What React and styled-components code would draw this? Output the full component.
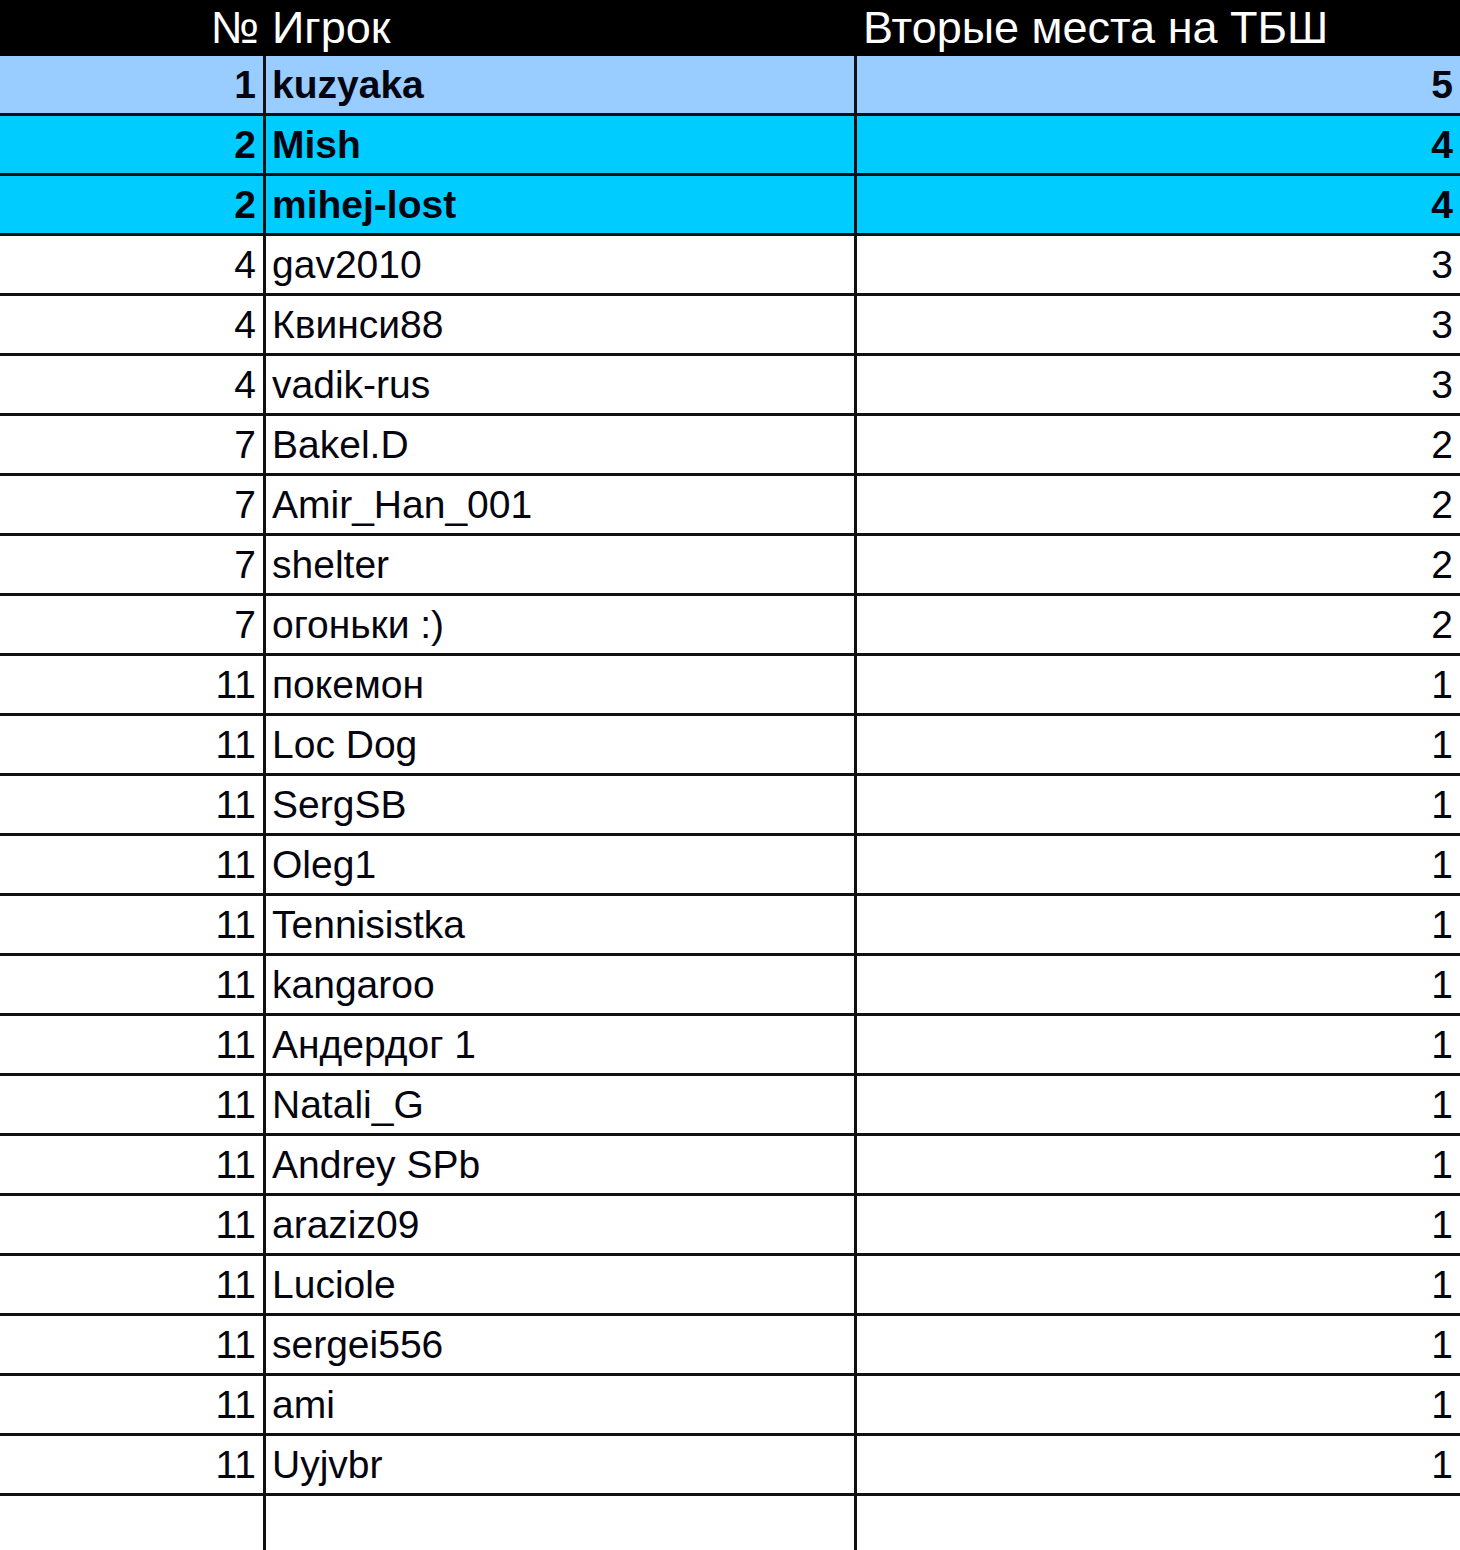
import styled, { createGlobalStyle } from "styled-components";

const GlobalStyle = createGlobalStyle`
    html, body {
        margin: 0;
        padding: 0;
        background: #ffffff;
        overflow: hidden;
    }
    body {
        font-family: "Liberation Sans", Arial, sans-serif;
    }
`;

const Sheet = styled.div`
    width: 1460px;
    height: 1550px;
    overflow: hidden;
    display: flex;
    flex-direction: column;
`;

const Head = styled.div`
    display: grid;
    grid-template-columns: 266px 591px 1fr;
    height: 56px;
    flex-shrink: 0;
    background-color: #000;
    color: #fff;
    font-size: 45px;
    line-height: 56px;
`;

const HeadCell = styled.div`
    text-align: ${(p) => (p.$right ? "right" : "left")};
    padding: ${(p) => (p.$right ? "0 7px 0 0" : "0 0 0 6px")};
    white-space: nowrap;
`;

const Row = styled.div`
    display: grid;
    grid-template-columns: 266px 591px 1fr;
    height: ${(p) => (p.$blank ? "60px" : "57px")};
    flex-shrink: 0;
    background-color: ${(p) => p.$bg || "#fff"};
    border-bottom: ${(p) => (p.$blank ? "none" : "3px solid #111")};
    font-size: 39px;
    font-weight: ${(p) => (p.$bold ? 700 : 400)};
    color: #050510;
`;

const Cell = styled.div`
    display: flex;
    align-items: center;
    justify-content: ${(p) => (p.$right ? "flex-end" : "flex-start")};
    padding: ${(p) => (p.$right ? "0 7px 0 0" : "0 0 0 6px")};
    border-right: ${(p) => (p.$last ? "none" : "3px solid #111")};
    white-space: nowrap;
`;

const players = [
    ["1", "kuzyaka", "5", "#99ccff", true],
    ["2", "Mish", "4", "#00ccff", true],
    ["2", "mihej-lost", "4", "#00ccff", true],
    ["4", "gav2010", "3"],
    ["4", "Квинси88", "3"],
    ["4", "vadik-rus", "3"],
    ["7", "Bakel.D", "2"],
    ["7", "Amir_Han_001", "2"],
    ["7", "shelter", "2"],
    ["7", "огоньки :)", "2"],
    ["11", "покемон", "1"],
    ["11", "Loc Dog", "1"],
    ["11", "SergSB", "1"],
    ["11", "Oleg1", "1"],
    ["11", "Tennisistka", "1"],
    ["11", "kangaroo", "1"],
    ["11", "Андердог 1", "1"],
    ["11", "Natali_G", "1"],
    ["11", "Andrey SPb", "1"],
    ["11", "araziz09", "1"],
    ["11", "Luciole", "1"],
    ["11", "sergei556", "1"],
    ["11", "ami", "1"],
    ["11", "Uyjvbr", "1"],
];

const App = () => {
    return (
        <>
        <GlobalStyle />
        <Sheet>
            <Head>
                <HeadCell $right>№</HeadCell>
                <HeadCell>Игрок</HeadCell>
                <HeadCell>Вторые места на ТБШ</HeadCell>
            </Head>
            {players.map(([place, name, count, bg, bold], i) => (
                <Row key={i} $bg={bg} $bold={bold}>
                    <Cell $right>{place}</Cell>
                    <Cell>{name}</Cell>
                    <Cell $right $last>{count}</Cell>
                </Row>
            ))}
            <Row $blank>
                <Cell $right />
                <Cell />
                <Cell $last />
            </Row>
        </Sheet>
        </>
    );
}

export default App;
